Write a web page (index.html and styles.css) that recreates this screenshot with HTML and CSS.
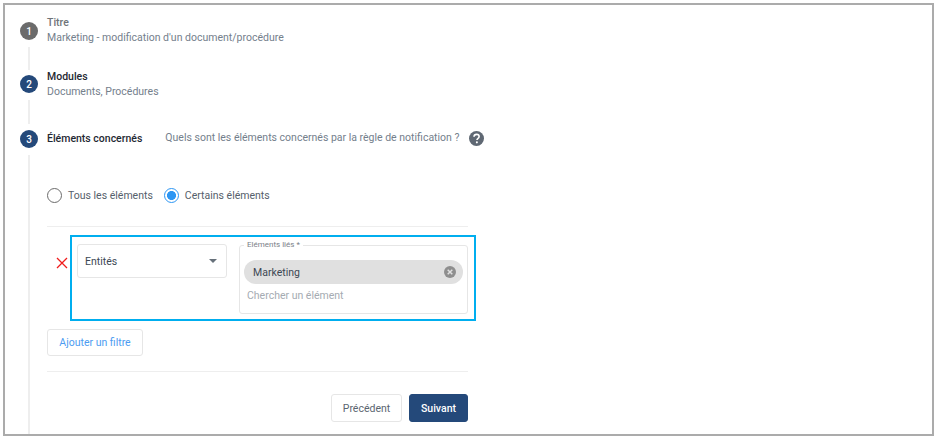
FILE: index.html
```html
<!DOCTYPE html>
<html lang="fr">
<head>
<meta charset="utf-8">
<title>Règle de notification</title>
<link rel="stylesheet" href="styles.css">
</head>
<body>
<main class="frame">
  <section class="step step-one">
    <div class="rail"><span class="num num-grey">1</span><span class="line"></span></div>
    <div class="body">
      <div class="title title-grey">Titre</div>
      <div class="sub">Marketing - modification d'un document/procédure</div>
    </div>
  </section>
  <section class="step step-two">
    <div class="rail"><span class="num">2</span><span class="line"></span></div>
    <div class="body">
      <div class="title">Modules</div>
      <div class="sub">Documents, Procédures</div>
    </div>
  </section>
  <section class="step step-three">
    <div class="rail"><span class="num">3</span><span class="line"></span></div>
    <div class="body body-wide">
      <header class="head">
        <div class="title">Éléments concernés</div>
        <div class="question">Quels sont les éléments concernés par la règle de notification ?</div>
        <svg class="help" viewBox="0 0 16 16" aria-hidden="true">
          <circle cx="8" cy="8" r="8" fill="#5f6873"/>
          <path d="M5.3 6.2C5.4 4.6 6.5 3.6 8.1 3.6c1.6 0 2.7 1 2.7 2.3 0 1-.5 1.6-1.4 2.2-.7.5-.9.8-.9 1.6" fill="none" stroke="#fff" stroke-width="1.7"/>
          <circle cx="8.4" cy="12.1" r="1.1" fill="#fff"/>
        </svg>
      </header>
      <div class="radios">
        <label class="radio"><span class="dot"></span>Tous les éléments</label>
        <label class="radio"><span class="dot dot-on"></span>Certains éléments</label>
      </div>
      <div class="filter-row">
        <svg class="remove" viewBox="0 0 12 12" aria-hidden="true">
          <path d="M1 1l10 10M11 1L1 11" stroke="#f01c1c" stroke-width="1.3" fill="none"/>
        </svg>
        <div class="highlight">
          <div class="select">
            <span>Entités</span>
            <span class="caret"></span>
          </div>
          <fieldset class="field">
            <legend>Eléments liés *</legend>
            <div class="chip">
              <span>Marketing</span>
              <svg class="chip-x" viewBox="0 0 12 12" aria-hidden="true">
                <circle cx="6" cy="6" r="6" fill="#8e8e8e"/>
                <path d="M3.7 3.7l4.6 4.6M8.3 3.7L3.7 8.3" stroke="#e0e0e0" stroke-width="1.5" fill="none"/>
              </svg>
            </div>
            <div class="placeholder">Chercher un élément</div>
          </fieldset>
        </div>
      </div>
      <button class="btn btn-add" type="button">Ajouter un filtre</button>
      <div class="footer">
        <button class="btn btn-prev" type="button">Précédent</button>
        <button class="btn btn-next" type="button">Suivant</button>
      </div>
    </div>
  </section>
</main>
</body>
</html>
```
FILE: styles.css
```css
* { box-sizing: border-box; }
html, body { margin: 0; height: 100%; overflow: hidden; background: #fff; }
body {
  padding: 3px 5px 1px 3px;
  font-family: Roboto, "Liberation Sans", sans-serif;
  font-size: 10.5px;
  color: #2d3a48;
}
.frame {
  height: 433px;
  border: 2px solid #ababab;
  padding: 11px 0 0 15px;
  display: flex;
  flex-direction: column;
  overflow: hidden;
}
.step { display: flex; gap: 9px; }
.step-one, .step-two { height: 54px; }
.step-three { flex: 1; min-height: 0; margin-top: 1px; }
.rail { width: 18px; display: flex; flex-direction: column; align-items: center; flex: none; }
.step-one .rail { padding-top: 6px; }
.step-two .rail { padding-top: 5px; }
.step-three .rail { padding-top: 5px; }
.num {
  width: 18px; height: 18px; border-radius: 50%;
  background: #24497a; color: #fff;
  font-size: 10px; font-weight: 500;
  display: flex; align-items: center; justify-content: center;
  flex: none;
}
.num-grey { background: #6b6b6b; }
.line { width: 2px; flex: 1; background: #eeeeee; margin-top: 7px; }
.body { display: flex; flex-direction: column; gap: 2px; }
.body-wide { width: 421px; gap: 0; padding-top: 4px; }
.title { font-weight: 500; color: #1f2933; line-height: 13px; white-space: nowrap; }
.title-grey { color: #6f7479; }
.sub { color: #74808c; line-height: 14px; white-space: nowrap; }
.head { display: flex; align-items: center; height: 18px; }
.question { color: #74808c; margin-left: 23px; white-space: nowrap; line-height: 14px; }
.help { width: 15px; height: 15px; margin-left: 10px; flex: none; }
.radios { display: flex; gap: 11px; margin-top: 40px; height: 16px; align-items: center; }
.radio { display: flex; align-items: center; gap: 6px; color: #55606b; white-space: nowrap; }
.dot { width: 15px; height: 15px; border-radius: 50%; border: 1.5px solid #6b6b6b; display: block; flex: none; }
.dot-on { border-color: #2d96f3; background: radial-gradient(circle, #2d96f3 0 4.2px, #fff 4.8px); }
.filter-row {
  margin-top: 23px; padding: 8px 0 0 9px;
  border-top: 1px solid #eeeeee;
  display: flex; align-items: flex-start;
  gap: 2px;
}
.remove { width: 12px; height: 12px; margin-top: 22px; flex: none; }
.highlight {
  width: 406px; height: 86px;
  margin-right: -8px;
  border: 2px solid #00aeef;
  padding: 7px 6px 0 5px;
  display: flex; gap: 12px; align-items: flex-start;
  flex: none;
}
.select {
  width: 150px; height: 34px;
  border: 1px solid #e6e6e6; border-radius: 3px;
  padding: 0 9px 0 7px;
  display: flex; align-items: center; justify-content: space-between;
  color: #3d4854;
}
.caret { width: 0; height: 0; border: 4px solid transparent; border-top: 4px solid #66707a; border-bottom: 0; }
.field {
  width: 229px; height: 74px;
  margin: -4px 0 0; padding: 10px 4px 0 4px;
  border: 1px solid #e6e6e6; border-radius: 3px;
  min-width: 0;
}
.field legend { font-size: 8px; color: #7a8087; padding: 0 3px; margin-left: 0; line-height: 10px; }
.chip {
  height: 24px; border-radius: 12px; background: #e0e0e0;
  display: flex; align-items: center; justify-content: space-between;
  padding: 0 7px 0 9px;
  color: #3d4854;
}
.chip-x { width: 12px; height: 12px; flex: none; }
.placeholder { color: #a5abb2; margin-top: 5px; margin-left: 3px; line-height: 14px; }
.btn {
  font: inherit; border-radius: 3px; cursor: pointer;
  background: #fff; border: 1px solid #e6e6e6;
  height: 28px; padding: 0;
}
.btn-add { width: 96px; color: #4c9cf1; margin-top: 8px; flex: none; height: 27px; }
.footer {
  margin-top: 15px; padding-top: 22px;
  border-top: 1px solid #eeeeee;
  display: flex; justify-content: flex-end; gap: 7px;
}
.btn-prev { width: 71px; color: #5b6570; }
.btn-next { width: 59px; color: #fff; background: #24497a; border-color: #24497a; font-weight: 500; }
```
